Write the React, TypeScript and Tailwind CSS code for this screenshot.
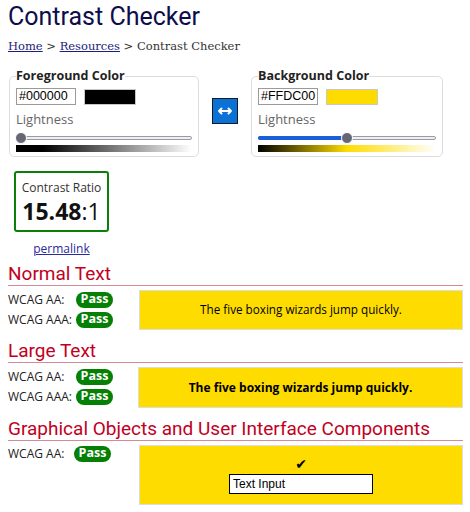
import React from 'react';

function Slider({ pct, fill }: { pct: number; fill?: boolean }) {
  return (
    <div className="relative mt-[5px] h-[12px]">
      <div className="absolute left-0 right-0 top-[4px] h-[4px] rounded-full border border-[#9a9aa6] bg-[#efeff2]" />
      {fill && (
        <div
          className="absolute left-0 top-[4px] h-[4px] rounded-l-full bg-[#1a5fd8]"
          style={{ width: `${pct}%` }}
        />
      )}
      <div
        className="absolute top-[0px] h-[12px] w-[12px] -translate-x-1/2 rounded-full border border-white bg-[#666674]"
        style={{ left: `calc(${pct}% + ${pct < 10 ? 5 : 0}px)` }}
      />
    </div>
  );
}

function ColorBox({
  title,
  hex,
  swatch,
  gradient,
  pct,
  fill,
  width,
}: {
  title: string;
  hex: string;
  swatch: string;
  gradient: string;
  pct: number;
  fill?: boolean;
  width: string;
}) {
  return (
    <fieldset className={`${width} rounded-[5px] border border-[#dcdcdc] px-[6px] pb-[4px] pt-[5px]`}>
      <legend className="px-0 text-[12.5px] font-bold leading-[14px] text-[#222]">{title}</legend>
      <div className="flex items-center gap-[8px]">
        <div className="h-[17px] w-[60px] border border-[#9a9a9a] bg-white pl-[2px] font-['Liberation_Sans'] text-[12.5px] leading-[15px] text-black">
          {hex}
        </div>
        <div className={`h-[16px] w-[52px] border border-[#c8c8c8] ${swatch}`} />
      </div>
      <div className="mt-[6px] text-[13px] leading-[16px] text-[#666]">Lightness</div>
      <Slider pct={pct} fill={fill} />
      <div className={`mt-[1px] h-[7px] ${gradient}`} />
    </fieldset>
  );
}

function Pass() {
  return (
    <span className="inline-flex h-[16px] w-[37px] items-center justify-center rounded-full bg-[#058005] text-[12.5px] font-bold leading-none text-white">
      Pass
    </span>
  );
}

function Heading({ children }: { children: React.ReactNode }) {
  return (
    <h2 className="border-b border-[#d68a92] font-['Roboto'] text-[19px] leading-[22px] text-[#c2001e]">
      {children}
    </h2>
  );
}

function Row({ label, w = 'w-[68px]' }: { label: string; w?: string }) {
  return (
    <div className="flex h-[19px] items-center">
      <span className={`${w} whitespace-nowrap text-[12px] text-[#222]`}>{label}</span>
      <Pass />
    </div>
  );
}

export default function App() {
  return (
    <div className="bg-white px-2 pr-[7px] font-['Open_Sans'] text-black">
      <h1 className="pt-[2px] font-['Roboto'] text-[25px] leading-[30px] text-[#0d0d4a]">
        Contrast Checker
      </h1>
      <nav className="mt-[6px] font-['DejaVu_Serif'] text-[11.5px] leading-[16px] text-[#333]">
        <a href="#" className="text-[#1d1d7a] underline">Home</a> &gt;{' '}
        <a href="#" className="text-[#1d1d7a] underline">Resources</a> &gt; Contrast Checker
      </nav>

      <div className="mt-[15px] flex items-center">
        <div className="ml-px">
          <ColorBox
            title="Foreground Color"
            hex="#000000"
            swatch="bg-black"
            gradient="bg-[linear-gradient(to_right,#000_15%,#fff)]"
            pct={0}
            width="w-[190px]"
          />
        </div>
        <button className="mx-[13px] -mt-[5px] flex h-[26px] w-[26px] items-center justify-center border border-[#1a1a1a] bg-[#0a72d6]">
          <svg width="16" height="10" viewBox="0 0 16 10" fill="none" stroke="white" strokeWidth="2" strokeLinecap="round" strokeLinejoin="round">
            <path d="M2 5h12M4.5 2.5L2 5l2.5 2.5M11.5 2.5L14 5l-2.5 2.5" />
          </svg>
        </button>
        <ColorBox
          title="Background Color"
          hex="#FFDC00"
          swatch="bg-[#ffdc00]"
          gradient="bg-[linear-gradient(to_right,#000,#ffdc00_50%,#fff)]"
          pct={50}
          fill
          width="w-[192px]"
        />
      </div>

      <div className="mt-[14px] ml-[6px] flex w-[95px] flex-col items-center rounded-[3px] border-2 border-[#0a800a] pb-[5px] pt-[7px]">
        <div className="text-[12px] leading-[16px] text-[#333]">Contrast Ratio</div>
        <div className="mt-[1px] text-[23px] leading-[28px] text-[#111]">
          <span className="font-bold">15.48</span>:1
        </div>
      </div>
      <div className="mt-[7px] w-[107px] text-center leading-[16px]">
        <a href="#" className="text-[12px] text-[#2a2aa0] underline">permalink</a>
      </div>

      <div className="mt-[6px]">
        <Heading>Normal Text</Heading>
        <div className="mt-[4px] flex items-start">
          <div className="flex w-[131px] flex-col gap-px">
            <Row label="WCAG AA:" />
            <Row label="WCAG AAA:" />
          </div>
          <div className="flex h-[40px] flex-1 items-center justify-center border border-[#dddddd] bg-[#ffdc00] text-[11.7px] text-black">
            The five boxing wizards jump quickly.
          </div>
        </div>
      </div>

      <div className="mt-[10px]">
        <Heading>Large Text</Heading>
        <div className="mt-[4px] flex items-start">
          <div className="flex w-[130px] flex-col gap-px">
            <Row label="WCAG AA:" />
            <Row label="WCAG AAA:" />
          </div>
          <div className="flex h-[41px] flex-1 items-center justify-center border border-[#dddddd] bg-[#ffdc00] text-[12px] font-bold text-black">
            The five boxing wizards jump quickly.
          </div>
        </div>
      </div>

      <div className="mt-[10px]">
        <Heading>Graphical Objects and User Interface Components</Heading>
        <div className="mt-[4px] flex items-start">
          <div className="flex w-[131px] flex-col">
            <div className="flex h-[17px] items-center">
              <span className="w-[66px] whitespace-nowrap text-[12px] text-[#222]">WCAG AA:</span>
              <Pass />
            </div>
          </div>
          <div className="flex h-[60px] flex-1 flex-col items-center justify-center border border-[#dddddd] bg-[#ffdc00]">
            <span className="font-['DejaVu_Sans'] text-[14px] leading-[14px] text-black">✔</span>
            <div className="mt-[3px] h-[20px] w-[144px] border border-black bg-white pl-[3px] font-['Liberation_Sans'] text-[12px] leading-[18px] text-black">
              Text Input
            </div>
          </div>
        </div>
      </div>
    </div>
  );
}
